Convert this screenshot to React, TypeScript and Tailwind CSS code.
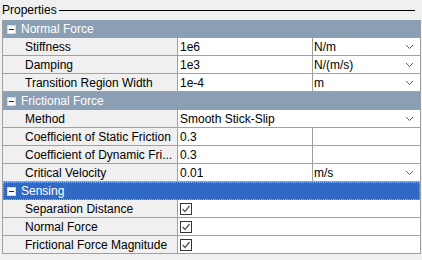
import type { ReactNode } from 'react'

type Prop = {
  label: string
  value?: string
  unit?: string
  kind: 'text' | 'select' | 'wide' | 'check'
}

type Group = {
  title: string
  selected?: boolean
  rows: Prop[]
}

const groups: Group[] = [
  {
    title: 'Normal Force',
    rows: [
      { label: 'Stiffness', value: '1e6', unit: 'N/m', kind: 'select' },
      { label: 'Damping', value: '1e3', unit: 'N/(m/s)', kind: 'select' },
      { label: 'Transition Region Width', value: '1e-4', unit: 'm', kind: 'select' },
    ],
  },
  {
    title: 'Frictional Force',
    rows: [
      { label: 'Method', value: 'Smooth Stick-Slip', kind: 'wide' },
      { label: 'Coefficient of Static Friction', value: '0.3', unit: '', kind: 'text' },
      { label: 'Coefficient of Dynamic Fri...', value: '0.3', unit: '', kind: 'text' },
      { label: 'Critical Velocity', value: '0.01', unit: 'm/s', kind: 'select' },
    ],
  },
  {
    title: 'Sensing',
    selected: true,
    rows: [
      { label: 'Separation Distance', kind: 'check' },
      { label: 'Normal Force', kind: 'check' },
      { label: 'Frictional Force Magnitude', kind: 'check' },
    ],
  },
]

function Chevron() {
  return (
    <svg width="9" height="6" viewBox="0 0 9 6" className="shrink-0">
      <polyline points="1,1 4.5,4.5 8,1" fill="none" stroke="#606060" strokeWidth="1" />
    </svg>
  )
}

function CheckBox() {
  return (
    <div className="flex h-[12px] w-[12px] items-center justify-center border border-[#333333] bg-white">
      <svg width="10" height="10" viewBox="0 0 10 10">
        <polyline points="1.5,5 4,7.5 8.5,2" fill="none" stroke="#555555" strokeWidth="1.2" />
      </svg>
    </div>
  )
}

function Cell({ children, className = '' }: { children?: ReactNode; className?: string }) {
  return <div className={`flex h-full items-center bg-white ${className}`}>{children}</div>
}

function PropRow({ p }: { p: Prop }) {
  return (
    <div className="flex h-[18px] border-b border-[#a0a0a0]">
      <div className="flex w-[175px] shrink-0 items-center whitespace-nowrap border-r border-[#a0a0a0] pl-[22px] text-black">
        {p.label}
      </div>
      {p.kind === 'check' && (
        <Cell className="flex-1 pl-[2px]">
          <CheckBox />
        </Cell>
      )}
      {p.kind === 'wide' && (
        <Cell className="flex-1 justify-between pl-[2px] pr-[6px]">
          <span>{p.value}</span>
          <Chevron />
        </Cell>
      )}
      {(p.kind === 'text' || p.kind === 'select') && (
        <>
          <Cell className="w-[135px] shrink-0 border-r border-[#a0a0a0] pl-[2px]">{p.value}</Cell>
          <Cell className="flex-1 justify-between pl-[1px] pr-[6px]">
            <span>{p.unit}</span>
            {p.kind === 'select' && <Chevron />}
          </Cell>
        </>
      )}
    </div>
  )
}

function GroupHeader({ g }: { g: Group }) {
  return (
    <div
      className={`flex h-[18px] items-center text-white ${
        g.selected ? 'bg-[#316ac5] outline-1 -outline-offset-1 outline-dotted outline-[#d9a54a]' : 'bg-[#8a9fb4]'
      }`}
    >
      <div className="ml-[4px] flex h-[9px] w-[9px] items-center justify-center border border-[#d8d8d8] bg-white">
        <div className="h-px w-[5px] bg-[#222222]" />
      </div>
      <span className="ml-[5px]">{g.title}</span>
    </div>
  )
}

export default function App() {
  return (
    <div className="h-[260px] w-[422px] overflow-hidden bg-[#f0f0f0] font-['Liberation_Sans',Arial,sans-serif] text-[12px] leading-[16px] text-black">
      <div className="flex h-[20px] items-start pl-[2px] pt-[2px]">
        <span>Properties</span>
        <div className="ml-[2px] mr-[7px] mt-[8px] h-px flex-1 bg-black" />
      </div>
      <div className="ml-[2px] w-[419px] border-x border-[#a0a0a0]">
        {groups.map((g) => (
          <div key={g.title}>
            <GroupHeader g={g} />
            {g.rows.map((p) => (
              <PropRow key={p.label} p={p} />
            ))}
          </div>
        ))}
      </div>
    </div>
  )
}
